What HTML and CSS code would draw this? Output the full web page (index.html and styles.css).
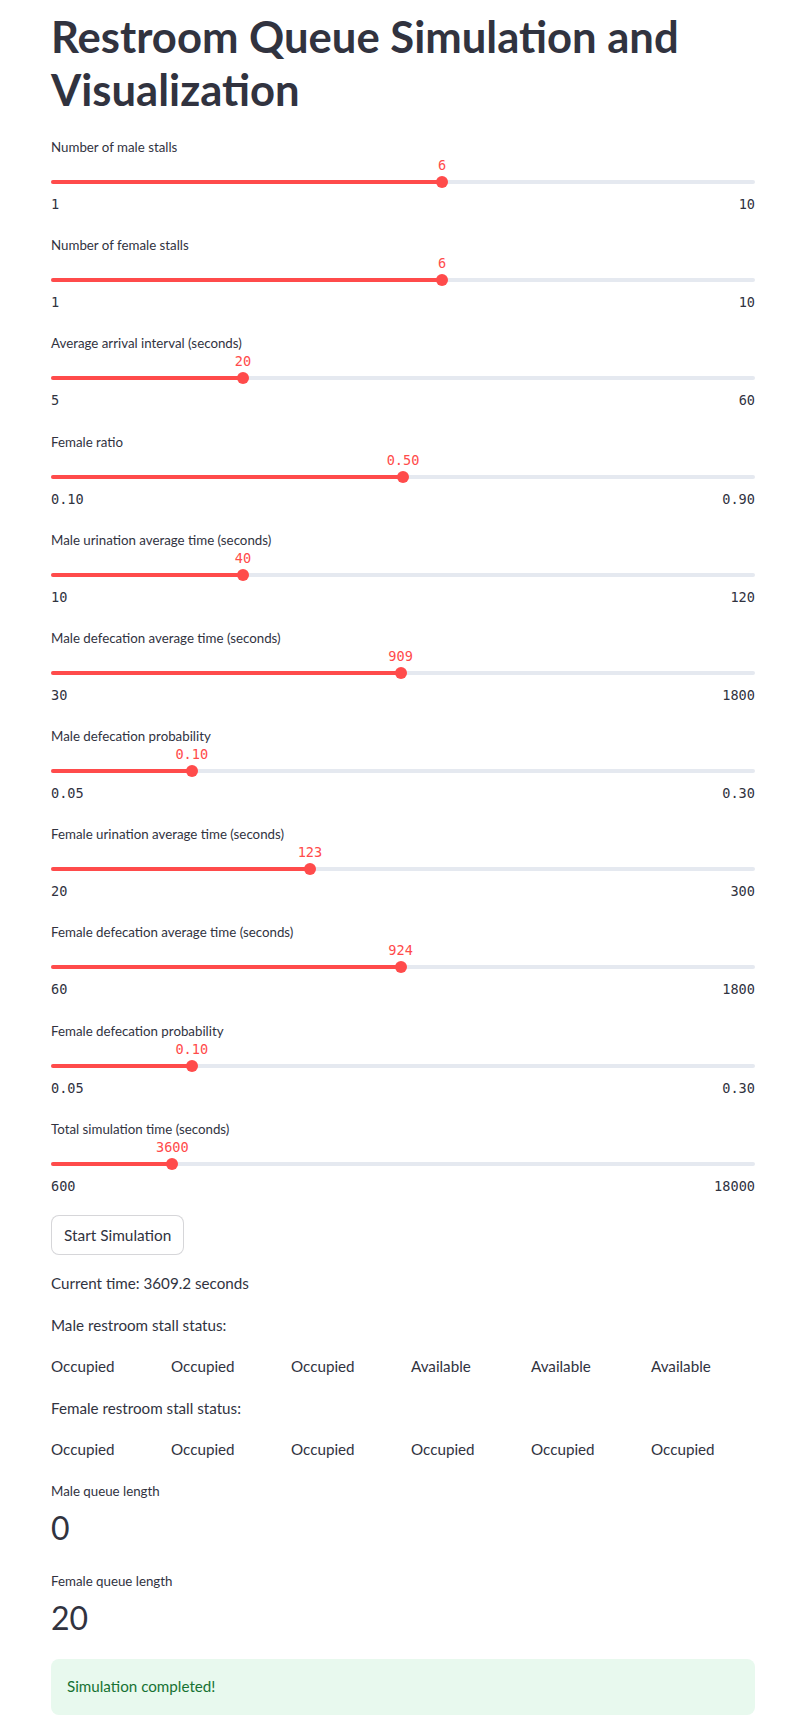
FILE: index.html
```html
<!DOCTYPE html>
<html lang="en">
<head>
<meta charset="utf-8">
<title>Restroom Queue Simulation and Visualization</title>
<link rel="stylesheet" href="styles.css">
</head>
<body>
<main class="page">
  <h1 class="title">Restroom Queue Simulation and Visualization</h1>

  <div class="slider">
    <div class="slider-label">Number of male stalls</div>
    <div class="slider-track-wrap">
      <div class="track"><div class="fill" style="width:55.556%"></div></div>
      <div class="thumb" style="left:55.556%"><span class="thumb-value">6</span></div>
    </div>
    <div class="ticks"><span>1</span><span>10</span></div>
  </div>

  <div class="slider">
    <div class="slider-label">Number of female stalls</div>
    <div class="slider-track-wrap">
      <div class="track"><div class="fill" style="width:55.556%"></div></div>
      <div class="thumb" style="left:55.556%"><span class="thumb-value">6</span></div>
    </div>
    <div class="ticks"><span>1</span><span>10</span></div>
  </div>

  <div class="slider">
    <div class="slider-label">Average arrival interval (seconds)</div>
    <div class="slider-track-wrap">
      <div class="track"><div class="fill" style="width:27.273%"></div></div>
      <div class="thumb" style="left:27.273%"><span class="thumb-value">20</span></div>
    </div>
    <div class="ticks"><span>5</span><span>60</span></div>
  </div>

  <div class="slider">
    <div class="slider-label">Female ratio</div>
    <div class="slider-track-wrap">
      <div class="track"><div class="fill" style="width:50%"></div></div>
      <div class="thumb" style="left:50%"><span class="thumb-value">0.50</span></div>
    </div>
    <div class="ticks"><span>0.10</span><span>0.90</span></div>
  </div>

  <div class="slider">
    <div class="slider-label">Male urination average time (seconds)</div>
    <div class="slider-track-wrap">
      <div class="track"><div class="fill" style="width:27.273%"></div></div>
      <div class="thumb" style="left:27.273%"><span class="thumb-value">40</span></div>
    </div>
    <div class="ticks"><span>10</span><span>120</span></div>
  </div>

  <div class="slider">
    <div class="slider-label">Male defecation average time (seconds)</div>
    <div class="slider-track-wrap">
      <div class="track"><div class="fill" style="width:49.661%"></div></div>
      <div class="thumb" style="left:49.661%"><span class="thumb-value">909</span></div>
    </div>
    <div class="ticks"><span>30</span><span>1800</span></div>
  </div>

  <div class="slider">
    <div class="slider-label">Male defecation probability</div>
    <div class="slider-track-wrap">
      <div class="track"><div class="fill" style="width:20%"></div></div>
      <div class="thumb" style="left:20%"><span class="thumb-value">0.10</span></div>
    </div>
    <div class="ticks"><span>0.05</span><span>0.30</span></div>
  </div>

  <div class="slider">
    <div class="slider-label">Female urination average time (seconds)</div>
    <div class="slider-track-wrap">
      <div class="track"><div class="fill" style="width:36.786%"></div></div>
      <div class="thumb" style="left:36.786%"><span class="thumb-value">123</span></div>
    </div>
    <div class="ticks"><span>20</span><span>300</span></div>
  </div>

  <div class="slider">
    <div class="slider-label">Female defecation average time (seconds)</div>
    <div class="slider-track-wrap">
      <div class="track"><div class="fill" style="width:49.655%"></div></div>
      <div class="thumb" style="left:49.655%"><span class="thumb-value">924</span></div>
    </div>
    <div class="ticks"><span>60</span><span>1800</span></div>
  </div>

  <div class="slider">
    <div class="slider-label">Female defecation probability</div>
    <div class="slider-track-wrap">
      <div class="track"><div class="fill" style="width:20%"></div></div>
      <div class="thumb" style="left:20%"><span class="thumb-value">0.10</span></div>
    </div>
    <div class="ticks"><span>0.05</span><span>0.30</span></div>
  </div>

  <div class="slider">
    <div class="slider-label">Total simulation time (seconds)</div>
    <div class="slider-track-wrap">
      <div class="track"><div class="fill" style="width:17.241%"></div></div>
      <div class="thumb" style="left:17.241%"><span class="thumb-value">3600</span></div>
    </div>
    <div class="ticks"><span>600</span><span>18000</span></div>
  </div>

  <button class="btn" type="button">Start Simulation</button>

  <p class="text">Current time: 3609.2 seconds</p>
  <p class="text">Male restroom stall status:</p>
  <div class="stalls">
    <p class="text">Occupied</p>
    <p class="text">Occupied</p>
    <p class="text">Occupied</p>
    <p class="text">Available</p>
    <p class="text">Available</p>
    <p class="text">Available</p>
  </div>
  <p class="text">Female restroom stall status:</p>
  <div class="stalls">
    <p class="text">Occupied</p>
    <p class="text">Occupied</p>
    <p class="text">Occupied</p>
    <p class="text">Occupied</p>
    <p class="text">Occupied</p>
    <p class="text">Occupied</p>
  </div>

  <div class="metric">
    <div class="metric-label">Male queue length</div>
    <div class="metric-value">0</div>
  </div>
  <div class="metric">
    <div class="metric-label">Female queue length</div>
    <div class="metric-value">20</div>
  </div>

  <div class="alert-success">Simulation completed!</div>
</main>
</body>
</html>
```
FILE: styles.css
```css
html, body {
  margin: 0;
  padding: 0;
  background: #ffffff;
}

body {
  font-family: "Lato", "Noto Sans", sans-serif;
  color: #31333f;
}

.page {
  width: 704px;
  margin-left: 51px;
  display: flex;
  flex-direction: column;
  gap: 16px;
  padding-bottom: 20px;
}

.title {
  margin: 0;
  padding: 10px 0 3.4px;
  font-family: "Lato", sans-serif;
  font-weight: 700;
  font-size: 43.6px;
  line-height: 52.8px;
  color: #31333f;
}

/* Slider */
.slider {
  display: flex;
  flex-direction: column;
  padding-bottom: 3.2px;
}

.slider-label {
  height: 24px;
  line-height: 24px;
  font-size: 13.3px;
  color: #31333f;
}

.slider-track-wrap {
  position: relative;
  height: 36px;
  padding-top: 21px;
  box-sizing: border-box;
}

.track {
  height: 4px;
  border-radius: 2px;
  background: #e5e9f0;
  overflow: hidden;
}

.fill {
  height: 100%;
  background: #ff4b4b;
}

.thumb {
  position: absolute;
  top: 17px;
  width: 12px;
  height: 12px;
  margin-left: -6px;
  border-radius: 50%;
  background: #ff4b4b;
}

.thumb-value {
  position: absolute;
  left: 50%;
  bottom: 13px;
  transform: translateX(-50%);
  font-family: "DejaVu Sans Mono", "Liberation Mono", monospace;
  font-size: 13.6px;
  line-height: 19px;
  color: #ff4b4b;
  white-space: nowrap;
}

.ticks {
  display: flex;
  justify-content: space-between;
  height: 19px;
  line-height: 19px;
  font-family: "DejaVu Sans Mono", "Liberation Mono", monospace;
  font-size: 13.6px;
  color: #31333f;
}

/* Button */
.btn {
  align-self: flex-start;
  display: inline-flex;
  align-items: center;
  justify-content: center;
  height: 40px;
  padding: 0 12px;
  margin: 0;
  background: #ffffff;
  border: 1px solid rgba(49, 51, 63, 0.2);
  border-radius: 8px;
  font-family: "Lato", sans-serif;
  font-size: 15.4px;
  color: #31333f;
  cursor: pointer;
}

/* Text */
.text {
  margin: 0;
  font-size: 15.2px;
  line-height: 25.6px;
  color: #31333f;
}

.stalls {
  display: grid;
  grid-template-columns: repeat(6, 1fr);
  column-gap: 16px;
}

/* Metric */
.metric {
  display: flex;
  flex-direction: column;
}

.metric-label {
  height: 24px;
  line-height: 24px;
  font-size: 13.3px;
  color: #31333f;
}

.metric-value {
  height: 50px;
  line-height: 50px;
  font-size: 32px;
  color: #31333f;
}

/* Alert */
.alert-success {
  padding: 15px 16px;
  border-radius: 8px;
  background: #e8f9ee;
  color: #177233;
  font-size: 15.2px;
  line-height: 25.6px;
}
```
